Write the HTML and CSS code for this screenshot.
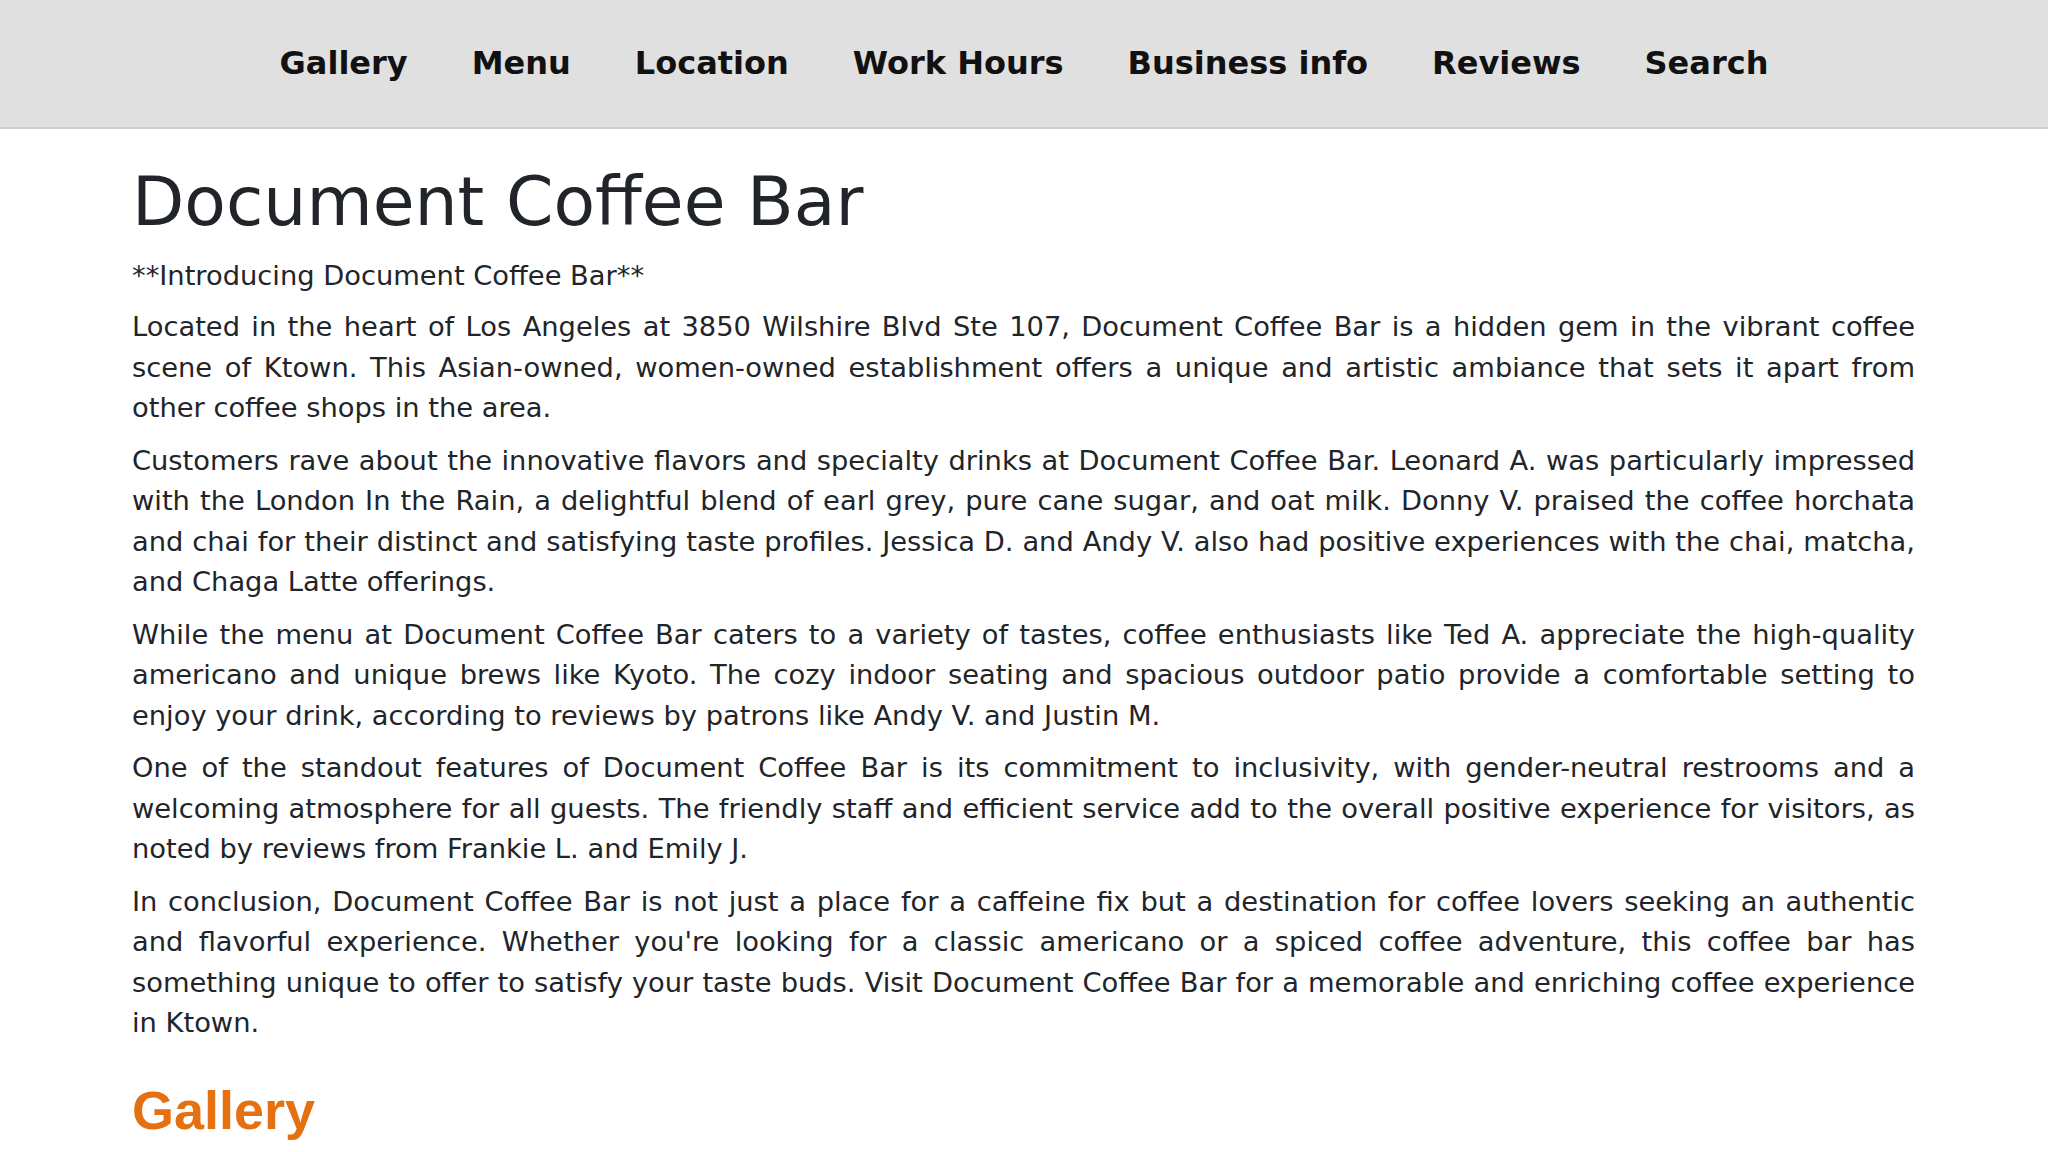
FILE: index.html
```html
<!DOCTYPE html>
<html lang="en">
<head>
<meta charset="utf-8">
<title>Document Coffee Bar</title>
<link rel="stylesheet" href="styles.css">
</head>
<body>
<nav class="topnav">
  <a href="#">Gallery</a>
  <a href="#">Menu</a>
  <a href="#">Location</a>
  <a href="#">Work Hours</a>
  <a href="#">Business info</a>
  <a href="#">Reviews</a>
  <a href="#">Search</a>
</nav>
<main class="content">
  <h1 class="title">Document Coffee Bar</h1>
  <p class="intro">**Introducing Document Coffee Bar**</p>
  <p>Located in the heart of Los Angeles at 3850 Wilshire Blvd Ste 107, Document Coffee Bar is a hidden gem in the vibrant coffee scene of Ktown. This Asian-owned, women-owned establishment offers a unique and artistic ambiance that sets it apart from other coffee shops in the area.</p>
  <p>Customers rave about the innovative flavors and specialty drinks at Document Coffee Bar. Leonard A. was particularly impressed with the London In the Rain, a delightful blend of earl grey, pure cane sugar, and oat milk. Donny V. praised the coffee horchata and chai for their distinct and satisfying taste profiles. Jessica D. and Andy V. also had positive experiences with the chai, matcha, and Chaga Latte offerings.</p>
  <p>While the menu at Document Coffee Bar caters to a variety of tastes, coffee enthusiasts like Ted A. appreciate the high-quality americano and unique brews like Kyoto. The cozy indoor seating and spacious outdoor patio provide a comfortable setting to enjoy your drink, according to reviews by patrons like Andy V. and Justin M.</p>
  <p>One of the standout features of Document Coffee Bar is its commitment to inclusivity, with gender-neutral restrooms and a welcoming atmosphere for all guests. The friendly staff and efficient service add to the overall positive experience for visitors, as noted by reviews from Frankie L. and Emily J.</p>
  <p>In conclusion, Document Coffee Bar is not just a place for a caffeine fix but a destination for coffee lovers seeking an authentic and flavorful experience. Whether you're looking for a classic americano or a spiced coffee adventure, this coffee bar has something unique to offer to satisfy your taste buds. Visit Document Coffee Bar for a memorable and enriching coffee experience in Ktown.</p>
  <h2 class="section-title">Gallery</h2>
</main>
</body>
</html>
```

FILE: styles.css
```css
html, body {
  margin: 0;
  padding: 0;
  background: #ffffff;
}

body {
  font-family: "DejaVu Sans", Verdana, sans-serif;
  font-size: 27.3px;
  line-height: 40.5px;
  color: #212529;
}

.topnav {
  display: flex;
  justify-content: center;
  align-items: center;
  gap: 64px;
  height: 127px;
  background: #e0e0e0;
  border-bottom: 2px solid #cfcfcf;
}

.topnav a {
  font-family: "DejaVu Sans", Verdana, sans-serif;
  font-weight: bold;
  font-size: 32px;
  line-height: 1.2;
  color: #111111;
  text-decoration: none;
}

.content {
  padding: 32px 133px 0 132px;
}

.title {
  font-family: "DejaVu Sans", Verdana, sans-serif;
  font-weight: normal;
  font-size: 68px;
  line-height: 1.2;
  margin: 0 0 13px 0;
  color: #212529;
}

.content p {
  margin: 0 0 12px 0;
  text-align: justify;
}

.content p.intro {
  margin-bottom: 11px;
}

.section-title {
  font-family: "Liberation Sans", Arial, sans-serif;
  font-weight: bold;
  font-size: 54px;
  line-height: 1.2;
  color: #e5700f;
  margin: 34px 0 0 0;
}
```
